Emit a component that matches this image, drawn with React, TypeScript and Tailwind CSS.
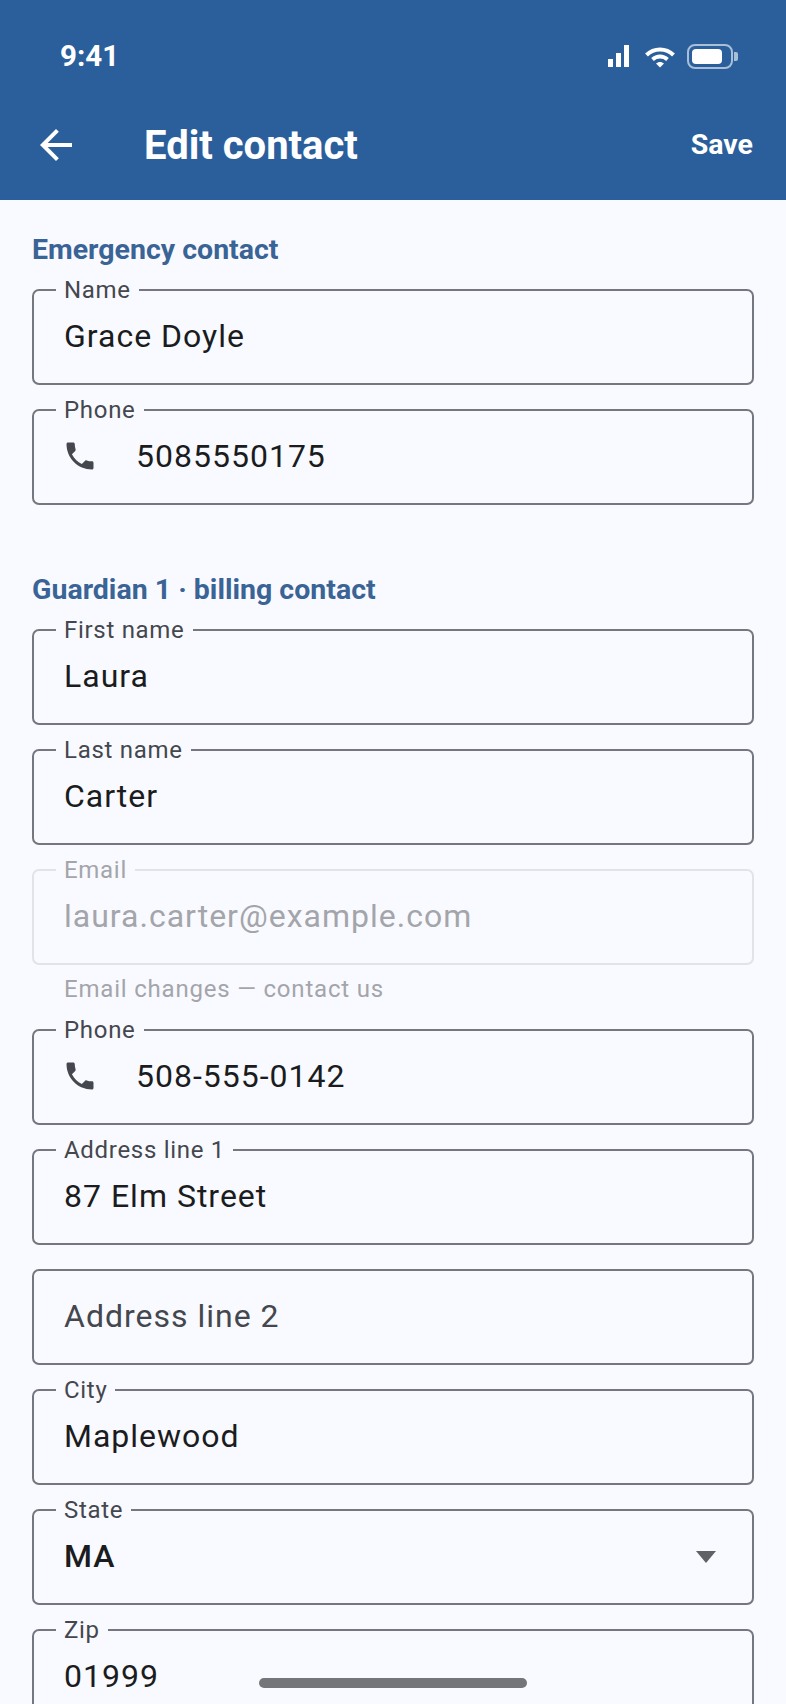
import { ReactNode } from "react";

const PhoneIcon = () => (
  <svg viewBox="0 0 24 24" className="ml-[-2px] h-[36px] w-[36px] shrink-0 fill-[#44474e]">
    <path d="M6.62 10.79c1.44 2.83 3.76 5.14 6.59 6.59l2.2-2.2c.27-.27.67-.36 1.02-.24 1.12.37 2.33.57 3.57.57.55 0 1 .45 1 1V20c0 .55-.45 1-1 1-9.39 0-17-7.61-17-17 0-.55.45-1 1-1h3.5c.55 0 1 .45 1 1 0 1.25.2 2.45.57 3.57.11.35.03.74-.25 1.02l-2.2 2.2z" />
  </svg>
);

const BackIcon = () => (
  <svg viewBox="0 0 24 24" className="h-[48px] w-[48px] shrink-0 fill-white">
    <path d="M20 11H7.83l5.59-5.59L12 4l-8 8 8 8 1.41-1.41L7.83 13H20v-2z" />
  </svg>
);

const StatusIcons = () => (
  <div className="flex items-center">
    <svg viewBox="0 0 21 22" className="mr-[16px] h-[22px] w-[21px] fill-white">
      <rect x="0" y="14" width="5" height="8" />
      <rect x="8" y="8" width="5" height="14" />
      <rect x="16" y="0" width="5" height="22" />
    </svg>
    <svg viewBox="0 0 30 22" className="mt-[2px] mr-[12px] h-[22px] w-[30px] fill-none stroke-white">
      <path d="M1.5 9C9 1.5 21 1.5 28.5 9" strokeWidth="4" />
      <path d="M7.5 13.5C11.8 9.5 18.2 9.5 22.5 13.5" strokeWidth="3.8" />
      <path d="M11 17.5L15 21.5L19 17.5C16.6 15.4 13.4 15.4 11 17.5Z" className="fill-white" strokeWidth="0" />
    </svg>
    <div className="flex items-center gap-[1px]">
      <div className="flex h-[25px] w-[46px] items-center rounded-[8px] border-2 border-[#a9bfd8] p-[3px]">
        <div className="h-full w-[30px] rounded-[4px] bg-white" />
      </div>
      <div className="h-[9px] w-[4px] rounded-r-[2px] bg-[#a9bfd8]" />
    </div>
  </div>
);

const Section = ({ children }: { children: ReactNode }) => (
  <h2 className="mb-[19px] text-[28.5px] leading-[40px] font-bold text-[#3a6496]">{children}</h2>
);

const Field = ({
  label,
  value,
  icon,
  disabled,
  placeholder,
  select,
}: {
  label?: string;
  value: string;
  icon?: boolean;
  disabled?: boolean;
  placeholder?: boolean;
  select?: boolean;
}) => {
  let color = "text-[#1a1c20]";
  if (placeholder) color = "text-[#44474e]";
  if (disabled) color = "text-[#a3a5ab]";

  return (
    <div
      className={`relative flex h-[96px] items-center rounded-[7px] border-2 pb-[2px] pl-[30px] ${
        disabled ? "border-[#e1e3e8]" : "border-[#74777f]"
      }`}
    >
      {label && (
        <span
          className={`absolute top-[-16px] left-[22px] bg-[#f9faff] px-[8px] text-[24px] leading-[30px] tracking-[0.7px] ${
            disabled ? "text-[#a3a5ab]" : "text-[#44474e]"
          }`}
        >
          {label}
        </span>
      )}
      {icon && <PhoneIcon />}
      <span
        className={`text-[32px] tracking-[1px] ${color} ${icon ? "ml-[38px]" : ""} ${select ? "font-medium" : ""}`}
      >
        {value}
      </span>
      {select && (
        <svg viewBox="0 0 20 12" className="absolute right-[36px] mt-[2px] h-[12px] w-[20px] fill-[#5f6166]">
          <path d="M0 0H20L10 12Z" />
        </svg>
      )}
    </div>
  );
};

export default function App() {
  return (
    <div className="relative h-[1704px] w-[786px] overflow-hidden bg-[#f9faff] font-['Roboto',sans-serif]">
      <header className="h-[200px] bg-[#2b5f9c] text-white">
        <div className="flex h-[110px] items-center justify-between pt-[2px] pr-[48px] pl-[60px]">
          <span className="text-[29.5px] font-bold">9:41</span>
          <StatusIcons />
        </div>
        <div className="flex h-[70px] items-center pr-[33px] pl-[32px]">
          <BackIcon />
          <h1 className="ml-[64px] pt-[1px] text-[40px] font-bold">Edit contact</h1>
          <button className="ml-auto text-[28.5px] font-bold">Save</button>
        </div>
      </header>

      <main className="px-[32px] pt-[30px]">
        <Section>Emergency contact</Section>
        <div className="flex flex-col gap-[24px]">
          <Field label="Name" value="Grace Doyle" />
          <Field label="Phone" value="5085550175" icon />
        </div>

        <div className="mt-[65px]">
          <Section>Guardian 1 · billing contact</Section>
        </div>
        <div className="flex flex-col gap-[24px]">
          <Field label="First name" value="Laura" />
          <Field label="Last name" value="Carter" />
          <div>
            <Field label="Email" value="laura.carter@example.com" disabled />
            <p className="mt-[8px] pl-[32px] text-[24px] leading-[32px] tracking-[0.8px] text-[#a3a5ab]">
              Email changes — contact us
            </p>
          </div>
          <Field label="Phone" value="508-555-0142" icon />
          <Field label="Address line 1" value="87 Elm Street" />
          <Field value="Address line 2" placeholder />
          <Field label="City" value="Maplewood" />
          <Field label="State" value="MA" select />
          <Field label="Zip" value="01999" />
        </div>
      </main>

      <div className="absolute bottom-[16px] left-[259px] h-[10px] w-[268px] rounded-full bg-[#747578]" />
    </div>
  );
}
